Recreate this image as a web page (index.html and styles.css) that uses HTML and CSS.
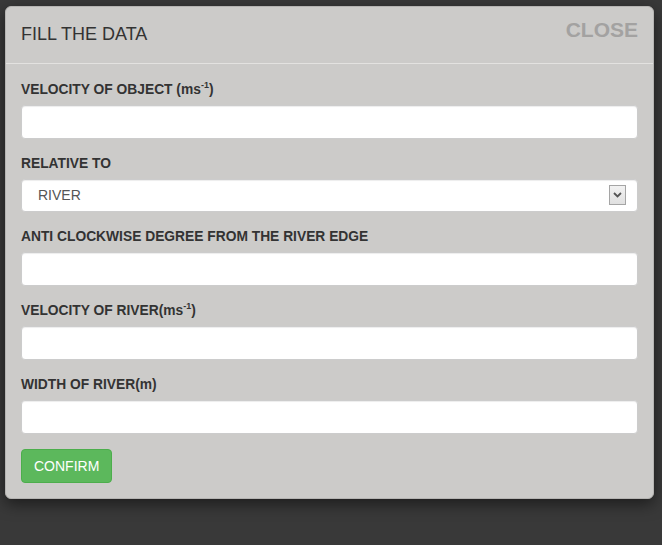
FILE: index.html
```html
<!DOCTYPE html>
<html>
<head>
<meta charset="utf-8">
<link rel="stylesheet" href="styles.css">
</head>
<body>
<div class="modal">
  <div class="modal-header">
    <h4 class="modal-title">FILL THE DATA</h4>
    <button class="close" type="button">CLOSE</button>
  </div>
  <form class="modal-body">
    <div class="form-group">
      <label>VELOCITY OF OBJECT (ms<sup>-1</sup>)</label>
      <input class="form-control" type="text">
    </div>
    <div class="form-group">
      <label>RELATIVE TO</label>
      <div class="select-wrap">
        <select class="form-control select"><option>RIVER</option><option>GROUND</option></select>
        <span class="select-arrow"><svg width="9" height="6" viewBox="0 0 9 6"><path d="M1 1 L4.5 4.5 L8 1" fill="none" stroke="#555" stroke-width="1.8"/></svg></span>
      </div>
    </div>
    <div class="form-group">
      <label>ANTI CLOCKWISE DEGREE FROM THE RIVER EDGE</label>
      <input class="form-control" type="text">
    </div>
    <div class="form-group">
      <label>VELOCITY OF RIVER(ms<sup>-1</sup>)</label>
      <input class="form-control" type="text">
    </div>
    <div class="form-group">
      <label>WIDTH OF RIVER(m)</label>
      <input class="form-control" type="text">
    </div>
    <button class="btn-confirm" type="button">CONFIRM</button>
  </form>
</div>
</body>
</html>
```
FILE: styles.css
```css
html, body {
  margin: 0;
  height: 100%;
}
body {
  background: #393939;
  font-family: "Liberation Sans", Arial, sans-serif;
  font-size: 14px;
  line-height: 1.42857;
  color: #333;
  padding: 6px 8px 0 5px;
  box-sizing: border-box;
}
.modal {
  width: 649px;
  background: #cccbc9;
  border: 1px solid #b5b4b2;
  border-radius: 6px;
  box-sizing: border-box;
  box-shadow: 0 5px 15px rgba(0, 0, 0, 0.5);
}
.modal-header {
  display: flex;
  justify-content: space-between;
  align-items: flex-start;
  padding: 15px;
  border-bottom: 1px solid #e3e2e0;
}
.modal-title {
  margin: 0;
  font-size: 18px;
  font-weight: normal;
  line-height: 1.42857;
  color: #333;
}
.close {
  margin-top: -3px;
  padding: 0;
  border: 0;
  background: transparent;
  font-family: "Liberation Sans", Arial, sans-serif;
  font-size: 21px;
  font-weight: bold;
  line-height: 1;
  color: #a3a2a1;
  cursor: pointer;
}
.modal-body {
  display: block;
  margin: 0;
  padding: 16px 15px 15px;
}
.form-group {
  margin-bottom: 15px;
}
.form-group label {
  display: block;
  margin-bottom: 5px;
  font-weight: bold;
  font-size: 13.8px;
  line-height: 20px;
  color: #333;
}
.form-group sup {
  font-size: 9px;
  line-height: 0;
  position: relative;
  vertical-align: baseline;
  top: -6px;
}
.form-control {
  display: block;
  width: 100%;
  height: 34px;
  box-sizing: border-box;
  padding: 6px 12px;
  font-family: "Liberation Sans", Arial, sans-serif;
  font-size: 14px;
  color: #555;
  background: #fff;
  border: 1px solid #ccc;
  border-radius: 4px;
  box-shadow: inset 0 1px 1px rgba(0, 0, 0, 0.075);
}
.select-wrap {
  position: relative;
}
.select {
  appearance: none;
  -webkit-appearance: none;
  padding-left: 16px;
  height: 33px;
}
.select-arrow {
  position: absolute;
  right: 12px;
  top: 6px;
  width: 15px;
  height: 18px;
  border: 1px solid #a5a5a5;
  background: linear-gradient(#f2f2f2, #e0e0e0);
  display: flex;
  align-items: center;
  justify-content: center;
  pointer-events: none;
}
.btn-confirm {
  display: block;
  height: 34px;
  padding: 6px 12px;
  font-family: "Liberation Sans", Arial, sans-serif;
  font-size: 14px;
  line-height: 20px;
  color: #fff;
  background: #5cb85c;
  border: 1px solid #4cae4c;
  border-radius: 4px;
  cursor: pointer;
}
```
